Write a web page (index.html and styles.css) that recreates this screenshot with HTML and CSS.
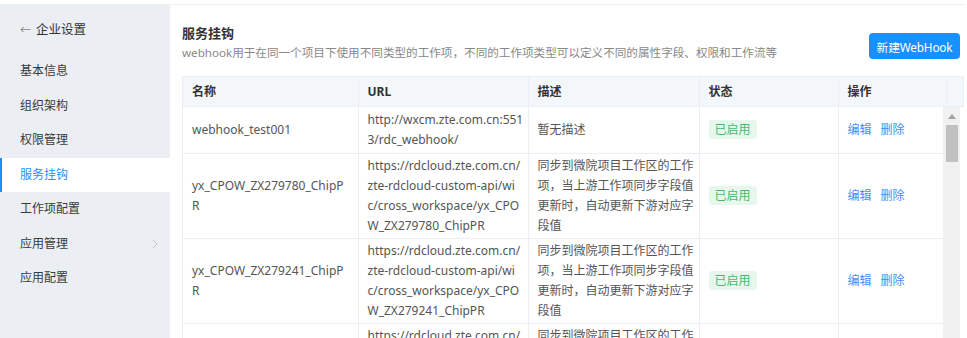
FILE: index.html
```html
<!DOCTYPE html>
<html lang="zh-CN">
<head>
  <meta charset="UTF-8">
  <title>服务挂钩</title>
  <link rel="stylesheet" href="styles.css">
</head>
<body>
  <div class="layout">
    <aside class="sidebar">
      <div class="back"><span class="arrow">&larr;</span>企业设置</div>
      <ul class="menu">
        <li>基本信息</li>
        <li>组织架构</li>
        <li>权限管理</li>
        <li class="active">服务挂钩</li>
        <li>工作项配置</li>
        <li class="has-sub">应用管理
          <svg class="chev" width="6" height="10" viewBox="0 0 6 10"><path d="M1 1l4 4-4 4" fill="none" stroke="#c0c4cc" stroke-width="1"/></svg>
        </li>
        <li>应用配置</li>
      </ul>
    </aside>

    <main class="main">
      <div class="page-head">
        <div>
          <h2 class="title">服务挂钩</h2>
          <p class="desc">webhook用于在同一个项目下使用不同类型的工作项，不同的工作项类型可以定义不同的属性字段、权限和工作流等</p>
        </div>
        <button class="btn-primary">新建WebHook</button>
      </div>

      <div class="table-wrap">
        <table class="grid head">
          <colgroup>
            <col style="width:175px"><col style="width:170px"><col style="width:171px"><col style="width:139px"><col style="width:108px"><col style="width:17px">
          </colgroup>
          <tr>
            <th>名称</th><th>URL</th><th>描述</th><th>状态</th><th>操作</th><th></th>
          </tr>
        </table>
        <div class="body">
          <div class="body-scroll">
            <table class="grid">
              <colgroup>
                <col style="width:175px"><col style="width:170px"><col style="width:171px"><col style="width:139px"><col style="width:108px">
              </colgroup>
              <tr class="row">
                <td>webhook_test001</td>
                <td>http://wxcm.zte.com.cn:551<br>3/rdc_webhook/</td>
                <td>暂无描述</td>
                <td><span class="tag">已启用</span></td>
                <td><a class="op">编辑</a><a class="op">删除</a></td>
              </tr>
              <tr class="row">
                <td>yx_CPOW_ZX279780_ChipP<br>R</td>
                <td>https://rdcloud.zte.com.cn/<br>zte-rdcloud-custom-api/wi<br>c/cross_workspace/yx_CPO<br>W_ZX279780_ChipPR</td>
                <td>同步到微院项目工作区的工作<br>项，当上游工作项同步字段值<br>更新时，自动更新下游对应字<br>段值</td>
                <td><span class="tag">已启用</span></td>
                <td><a class="op">编辑</a><a class="op">删除</a></td>
              </tr>
              <tr class="row">
                <td>yx_CPOW_ZX279241_ChipP<br>R</td>
                <td>https://rdcloud.zte.com.cn/<br>zte-rdcloud-custom-api/wi<br>c/cross_workspace/yx_CPO<br>W_ZX279241_ChipPR</td>
                <td>同步到微院项目工作区的工作<br>项，当上游工作项同步字段值<br>更新时，自动更新下游对应字<br>段值</td>
                <td><span class="tag">已启用</span></td>
                <td><a class="op">编辑</a><a class="op">删除</a></td>
              </tr>
              <tr class="row">
                <td>yx_CPOW_ZX279102_ChipP<br>R</td>
                <td>https://rdcloud.zte.com.cn/<br>zte-rdcloud-custom-api/wi<br>c/cross_workspace/yx_CPO<br>W_ZX279102_ChipPR</td>
                <td>同步到微院项目工作区的工作<br>项，当上游工作项同步字段值<br>更新时，自动更新下游对应字<br>段值</td>
                <td><span class="tag">已启用</span></td>
                <td><a class="op">编辑</a><a class="op">删除</a></td>
              </tr>
            </table>
          </div>
          <div class="scrollbar">
            <svg class="up" width="8" height="5" viewBox="0 0 8 5"><path d="M0 5L4 0 8 5z" fill="#a3a3a3"/></svg>
            <div class="thumb"></div>
          </div>
        </div>
      </div>
    </main>
  </div>
</body>
</html>
```
FILE: styles.css
```css
* {
  box-sizing: border-box;
}
html, body {
  margin: 0;
  height: 100%;
  overflow: hidden;
}
body {
  background-color: #fff;
  font-family: "Noto Sans", "Noto Sans CJK SC", sans-serif;
  font-size: 12px;
  color: #333;
  padding-top: 4px;
}
.layout {
  display: flex;
  height: 100%;
}
.sidebar {
  width: 170px;
  flex-shrink: 0;
  background-color: #ebeef2;
}
.back {
  padding: 16px 0 14px 20px;
  line-height: 20px;
  font-size: 12.5px;
  color: #333;
}
.back .arrow {
  color: #888;
  margin-right: 5px;
  font-size: 11px;
}
.menu {
  list-style: none;
  margin: 0;
  padding: 0;
}
.menu li {
  height: 34.5px;
  line-height: 34.5px;
  color: #3a3a3a;
  display: flex;
  align-items: center;
  justify-content: space-between;
  padding-right: 12px;
  border-left: 2px solid transparent;
  padding-left: 18px;
}
.menu li.active {
  background-color: #fff;
  color: #1890ff;
  border-left-color: #1890ff;
}
.main {
  flex: 1;
  min-width: 0;
  border-top: 1px solid #f0f0f0;
  padding: 17px 5px 0 12px;
  margin-right: 2px;
}
.page-head {
  display: flex;
  justify-content: space-between;
  align-items: flex-end;
  margin-bottom: 14px;
}
.title {
  margin: 0;
  font-size: 13px;
  font-weight: bold;
  line-height: 22px;
  color: #333;
}
.desc {
  margin: 0;
  line-height: 18px;
  font-size: 11.6px;
  color: #888;
}
.btn-primary {
  height: 26px;
  width: 91px;
  padding: 0;
  border: none;
  border-radius: 4px;
  background-color: #1890ff;
  color: #fff;
  font-family: inherit;
  font-size: 11.8px;
  letter-spacing: -0.2px;
  white-space: nowrap;
  margin-bottom: 3px;
}
.table-wrap {
  border-left: 1px solid #ebeef5;
}
.grid {
  width: 780px;
  table-layout: fixed;
  border-collapse: collapse;
}
.grid th,
.grid td {
  border-right: 1px solid #ebeef5;
  border-bottom: 1px solid #ebeef5;
  padding: 2px 9px;
  text-align: left;
  vertical-align: middle;
  white-space: nowrap;
  overflow: hidden;
  line-height: 20px;
  color: #555;
}
.grid th {
  height: 30px;
  background-color: #f4f7fa;
  color: #333;
  font-weight: bold;
}
.grid.head {
  border-top: 1px solid #ebeef5;
}
.row td {
  height: 46px;
}
.body {
  display: flex;
}
.body-scroll {
  width: 763px;
  overflow: hidden;
}
.body-scroll .grid {
  width: 763px;
}
.scrollbar {
  width: 17px;
  background-color: #f1f1f1;
  display: flex;
  flex-direction: column;
  align-items: center;
}
.scrollbar .up {
  margin: 7px 0 6px;
}
.thumb {
  width: 12px;
  height: 37px;
  background-color: #c1c1c1;
}
.tag {
  display: inline-block;
  padding: 0 6px;
  line-height: 19px;
  border-radius: 3px;
  background-color: #e8f7ee;
  color: #46b96f;
}
.op {
  color: #3f8efc;
  margin-right: 9px;
  cursor: pointer;
}
```
